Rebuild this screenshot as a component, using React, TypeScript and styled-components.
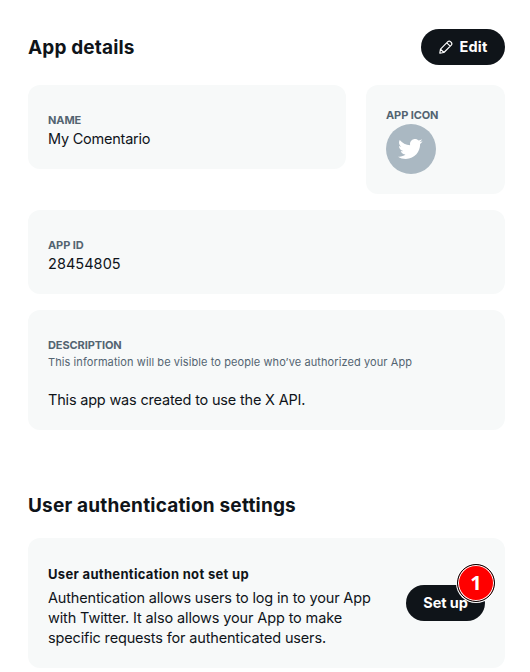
import React from "react";
import styled, { createGlobalStyle } from "styled-components";

const GlobalStyle = createGlobalStyle`
  * { box-sizing: border-box; }
  body {
    margin: 0;
    background: #fff;
    color: #0f1419;
    font-family: Inter, "Liberation Sans", sans-serif;
    overflow: hidden;
  }
  h2, h3, p { margin: 0; }
`;

const Page = styled.main`
  width: 530px;
  height: 672px;
  padding: 29px 25px 0 28px;
`;

const SectionHeader = styled.header<{ $spaced?: boolean }>`
  display: flex;
  align-items: center;
  justify-content: space-between;
  height: 36px;
  margin-top: ${(p) => (p.$spaced ? "57px" : "0")};
  margin-bottom: ${(p) => (p.$spaced ? "15px" : "20px")};
`;

const Title = styled.h2<{ $track?: string }>`
  padding-top: 2px;
  font-size: 19px;
  line-height: 24px;
  font-weight: 700;
  letter-spacing: ${(p) => p.$track ?? "0.15px"};
  white-space: nowrap;
`;

const Button = styled.button`
  display: flex;
  align-items: center;
  justify-content: center;
  gap: 6px;
  flex: none;
  height: 36px;
  padding: 0 16px;
  border: 0;
  border-radius: 18px;
  background: #0f1419;
  color: #fff;
  font: 700 14.5px/20px Inter, "Liberation Sans", sans-serif;
  letter-spacing: -0.1px;
  white-space: nowrap;
`;

const EditButton = styled(Button)`
  width: 84px;
  padding-right: 17px;
  letter-spacing: 0.2px;
`;

const SetupButton = styled(Button)`
  width: 79px;
`;

const TopRow = styled.div`
  display: grid;
  grid-template-columns: 318px 139px;
  gap: 20px;
  align-items: start;
  margin-bottom: 16px;
`;

const Card = styled.section<{ $height: number; $top?: number; $below?: number }>`
  height: ${(p) => p.$height}px;
  margin-bottom: ${(p) => p.$below ?? 0}px;
  padding: ${(p) => p.$top ?? 27}px 20px 0;
  border-radius: 12px;
  background: #f7f9f9;
`;

const Label = styled.h3`
  color: #536471;
  font-size: 11px;
  line-height: 16px;
  font-weight: 700;
  letter-spacing: -0.1px;
  text-transform: uppercase;
  white-space: nowrap;
`;

const Text = styled.p<{ $track?: string }>`
  margin-top: 1px;
  font-size: 14.5px;
  line-height: 20px;
  letter-spacing: ${(p) => p.$track ?? "-0.19px"};
  white-space: nowrap;
`;

const Hint = styled.p`
  margin: 1px 0 20px;
  color: #536471;
  font-size: 11px;
  line-height: 16px;
  letter-spacing: 0.09px;
  white-space: nowrap;
`;

const Avatar = styled.div`
  display: flex;
  align-items: center;
  justify-content: center;
  width: 50px;
  height: 50px;
  margin-top: 1px;
  padding-right: 2px;
  border-radius: 50%;
  background: #aab8c2;
`;

const AuthCard = styled(Card)`
  display: flex;
  align-items: flex-start;
  justify-content: space-between;
`;

const AuthTitle = styled.h3`
  margin-bottom: 4px;
  font-size: 13px;
  line-height: 20px;
  font-weight: 700;
  letter-spacing: 0.32px;
  white-space: nowrap;
`;

const Line = styled.span<{ $track: string }>`
  display: block;
  letter-spacing: ${(p) => p.$track};
`;

const SetupArea = styled.div`
  position: relative;
  margin-top: 21px;
`;

const Marker = styled.span`
  position: absolute;
  top: -21px;
  right: -10px;
  display: flex;
  align-items: center;
  justify-content: center;
  width: 38px;
  height: 38px;
  border: 1px solid #000;
  border-radius: 50%;
  background: #f00;
  box-shadow: inset 0 0 0 1px #fff, 0 0 0 1px #fff;
  color: #fff;
  font: 700 20px/24px "Open Sans", sans-serif;
`;

const PencilIcon = () => (
  <svg width="16" height="16" viewBox="0 0 16 16" fill="none" stroke="#fff" strokeWidth="1.15" strokeLinejoin="round">
    <path d="M1.8 14.2l.7-4.1 7.4-7.4c.8-.8 1.8-.8 2.6 0l.8.8c.8.8.8 1.8 0 2.6l-7.4 7.4zM8.8 3.8l3.4 3.4M2.5 10.1l3.4 3.4" />
  </svg>
);

const BirdIcon = () => (
  <svg width="26" height="26" viewBox="0 0 24 24" fill="#fff">
    <path d="M23.643 4.937c-.835.37-1.732.62-2.675.733.962-.576 1.7-1.49 2.048-2.578-.9.534-1.897.922-2.958 1.13-.85-.904-2.06-1.47-3.4-1.47-2.572 0-4.658 2.086-4.658 4.66 0 .364.042.718.12 1.06-3.873-.195-7.304-2.05-9.602-4.868-.4.69-.63 1.49-.63 2.342 0 1.616.823 3.043 2.072 3.878-.764-.025-1.482-.234-2.11-.583v.06c0 2.257 1.605 4.14 3.737 4.568-.392.106-.803.162-1.227.162-.3 0-.593-.028-.877-.082.593 1.85 2.313 3.198 4.352 3.234-1.595 1.25-3.604 1.995-5.786 1.995-.376 0-.747-.022-1.112-.065 2.062 1.323 4.51 2.093 7.14 2.093 8.57 0 13.255-7.098 13.255-13.254 0-.2-.005-.402-.014-.602.91-.658 1.7-1.477 2.323-2.41z" />
  </svg>
);

export default function App() {
  return (
    <Page>
      <GlobalStyle />
      <SectionHeader>
        <Title>App details</Title>
        <EditButton>
          <PencilIcon />
          Edit
        </EditButton>
      </SectionHeader>
      <TopRow>
        <Card $height={84}>
          <Label>Name</Label>
          <Text $track="-0.23px">My Comentario</Text>
        </Card>
        <Card $height={109} $top={22}>
          <Label>App icon</Label>
          <Avatar>
            <BirdIcon />
          </Avatar>
        </Card>
      </TopRow>
      <Card $height={84} $below={16}>
        <Label>App ID</Label>
        <Text $track="0.05px">28454805</Text>
      </Card>
      <Card $height={120}>
        <Label>Description</Label>
        <Hint>This information will be visible to people who’ve authorized your App</Hint>
        <Text>This app was created to use the X API.</Text>
      </Card>
      <SectionHeader $spaced>
        <Title $track="0.2px">User authentication settings</Title>
      </SectionHeader>
      <AuthCard $height={130} $top={26}>
        <div>
          <AuthTitle>User authentication not set up</AuthTitle>
          <Text>
            <Line $track="-0.17px">Authentication allows users to log in to your App</Line>
            <Line $track="-0.13px">with Twitter. It also allows your App to make</Line>
            <Line $track="-0.16px">specific requests for authenticated users.</Line>
          </Text>
        </div>
        <SetupArea>
          <SetupButton>Set up</SetupButton>
          <Marker>1</Marker>
        </SetupArea>
      </AuthCard>
    </Page>
  );
}
